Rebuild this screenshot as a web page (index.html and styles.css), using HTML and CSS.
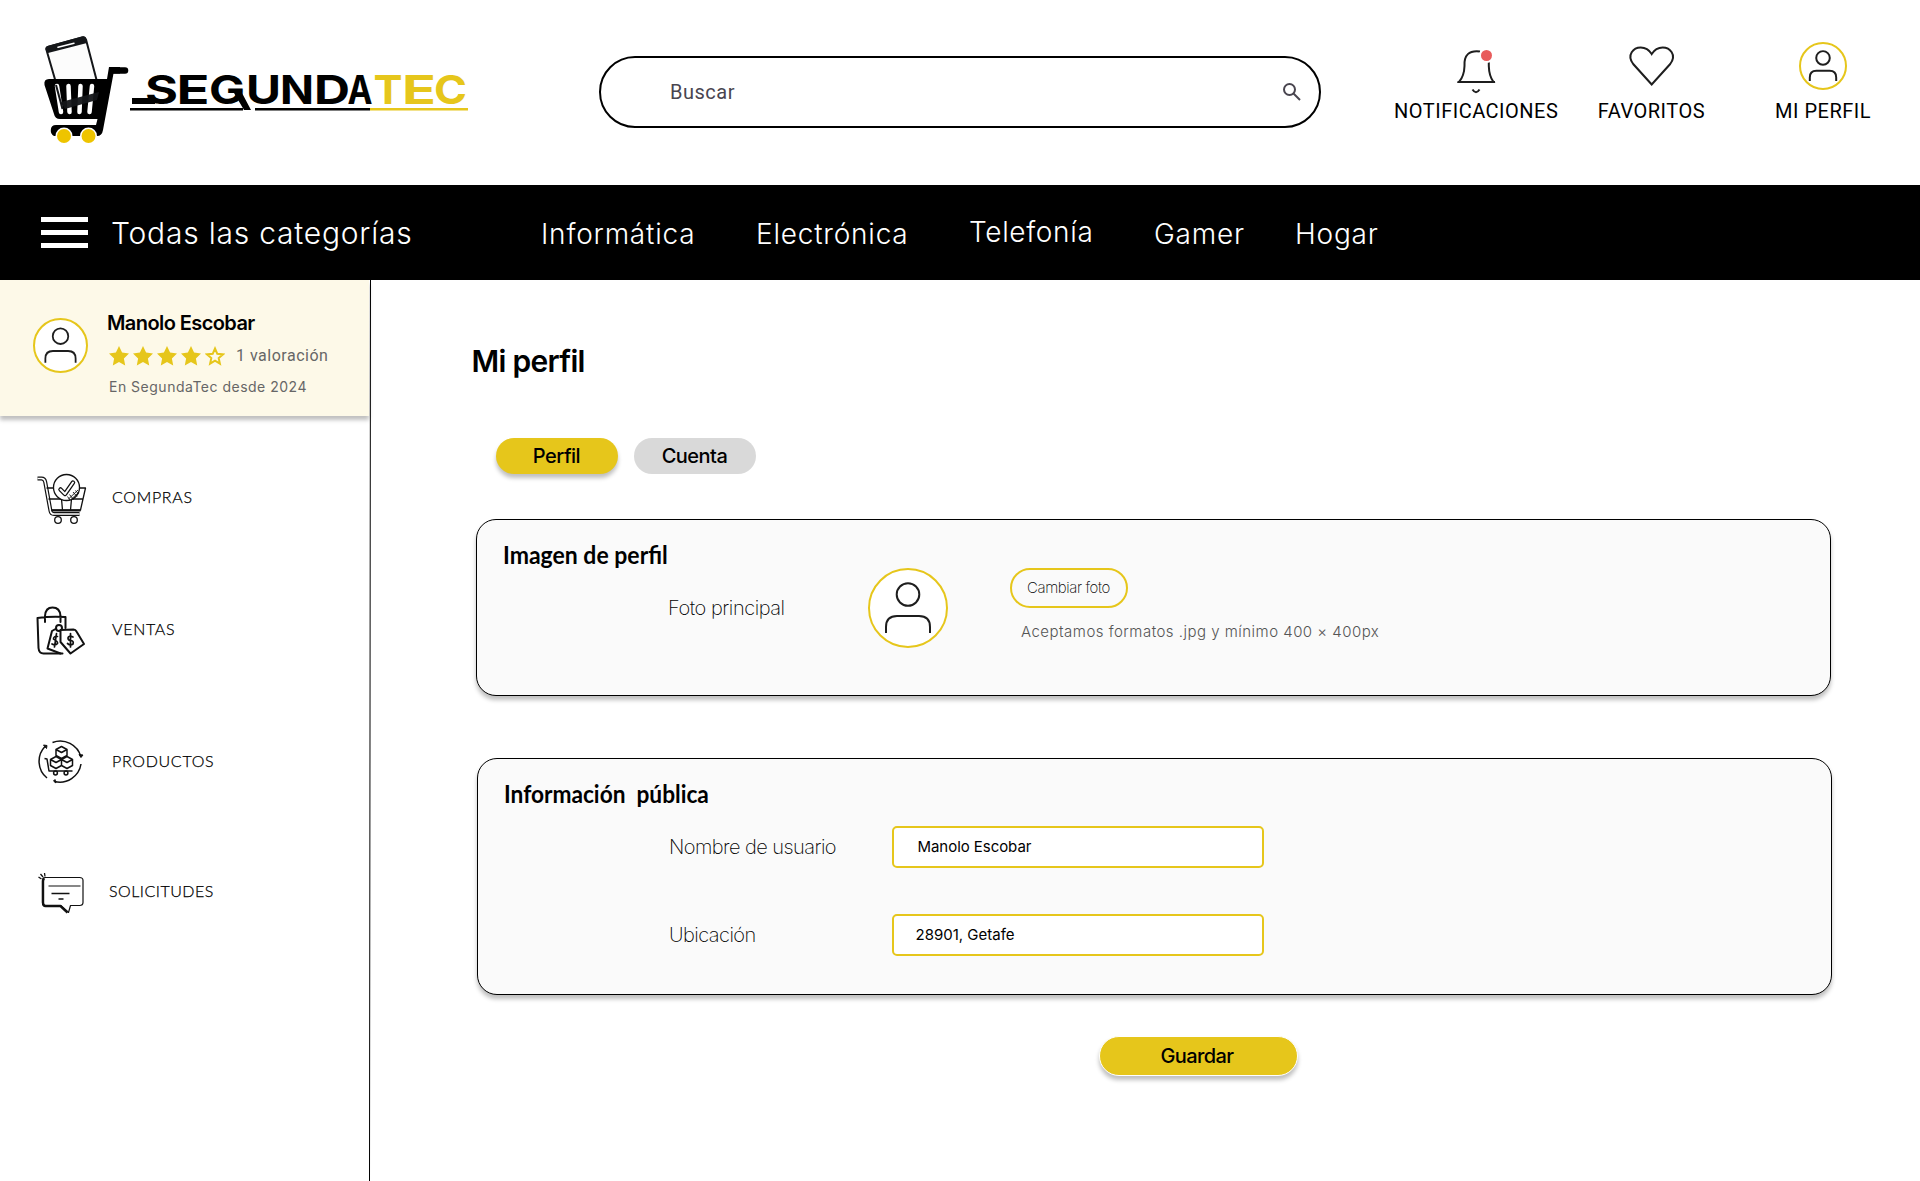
FILE: index.html
```html
<!DOCTYPE html>
<html lang="es">
<head>
<meta charset="utf-8">
<title>SegundaTec - Mi perfil</title>
<link rel="stylesheet" href="styles.css">
</head>
<body>
<svg class="defs" width="0" height="0" aria-hidden="true">
  <symbol id="avatar" viewBox="0 0 80 80">
    <circle cx="40" cy="26.5" r="11.3"/>
    <path d="M18 65V59Q18 48 29 48H51Q62 48 62 59V65"/>
  </symbol>
  <symbol id="star" viewBox="0 0 20 20"><path d="M10 0l3.09 6.6 6.91.9-5.1 4.9 1.3 7.1-6.2-3.5-6.2 3.5 1.3-7.1L0 7.5l6.9-.9z"/></symbol>
</svg>

<header class="top">
  <svg class="logo" viewBox="0 0 450 120" width="450" height="120">
    <g>
      <path fill="#fcfcfc" stroke="#141619" stroke-width="2" stroke-linejoin="round" d="M16.500 10Q16 7.500 18.500 6.800L52 -2.500Q55 -3.300 56 -.5L71 57Q71.500 60 69 61L37 69.500Q34 70 33 67Z"/>
      <path fill="#141619" d="M15.500 9.500Q15 7 17.500 6L52 -3.500Q55 -4.200 56 -1.500L57 3L18 13Z"/>
      <path stroke="#fff" stroke-width="1.500" stroke-linecap="round" d="M28 7.300L44 3.200"/>
      <path fill="#141619" d="M31 61L69 51L71.500 58Q71.500 60.500 69 61L37 70Q34 70 33 67Z"/>
      <path fill="none" stroke="#000" stroke-width="6.500" stroke-linecap="round" d="M95 30.500H83"/>
      <path fill="#000" d="M79 27H90V33.500H83.500L73 90Q72 96 67 96H24Q20.500 94 20.800 90Q21 85 26 85H66L67.500 79H30Q25 79 24 74L14.500 45Q13.500 39 19 39H77Z"/>
      <path stroke="#fff" stroke-width="4.500" stroke-linecap="round" d="M27 46L31 72M38.500 46L39.500 72M50.500 46L49.500 72M62 46L59.500 72"/>
      <path fill="#141619" opacity=".95" d="M31 62L69 52L67 60L35 69Z"/>
      <path stroke="#141619" stroke-width="2" d="M26 45L32.500 69"/>
      <circle cx="34" cy="96" r="8.500" fill="#fff"/><circle cx="58.500" cy="96" r="8.500" fill="#fff"/>
      <circle cx="34" cy="96" r="7" fill="#eec400"/><circle cx="58.500" cy="96" r="7" fill="#eec400"/>
    </g>
    <g class="wordmark">
      <text y="64"><tspan x="115" textLength="33" lengthAdjust="spacingAndGlyphs">S</tspan><tspan x="146.500" textLength="33" lengthAdjust="spacingAndGlyphs">E</tspan><tspan x="179" textLength="36" lengthAdjust="spacingAndGlyphs">G</tspan><tspan x="216" textLength="35" lengthAdjust="spacingAndGlyphs">U</tspan><tspan x="250" textLength="34" lengthAdjust="spacingAndGlyphs">N</tspan><tspan x="284" textLength="36" lengthAdjust="spacingAndGlyphs">D</tspan><tspan x="317.500" textLength="25" lengthAdjust="spacingAndGlyphs">A</tspan></text>
      <text class="gold" y="64"><tspan x="343.500" textLength="29" lengthAdjust="spacingAndGlyphs">T</tspan><tspan x="372" textLength="34" lengthAdjust="spacingAndGlyphs">E</tspan><tspan x="404" textLength="33" lengthAdjust="spacingAndGlyphs">C</tspan></text>
    </g>
    <path fill="#000" d="M102 58H125V64H102ZM100 68H213V70.500H100ZM204 53H212L221 70H214ZM225 68H340V70.500H225Z"/>
    <path fill="#e6c61b" d="M340 68H438V70.500H340Z"/>
  </svg>
  <div class="search">
    <span>Buscar</span>
    <svg width="18" height="18" viewBox="0 0 18 18" fill="none" stroke="#49454f" stroke-width="2"><circle cx="6.500" cy="6.500" r="5.500"/><path d="M10.500 10.500L17 17"/></svg>
  </div>
  <nav class="actions">
    <a class="action">
      <svg width="50" height="50" viewBox="0 0 50 50" fill="none" stroke="#1e1e1e" stroke-width="2">
        <path d="M29 9.500Q12.500 7.500 13.500 24C13.300 31 11.500 36 8 40H42.500C39.500 36 38 31 37.800 24V18M6.500 40H44" /><path d="M21.500 47.500Q25 53 28.500 47.500"/>
        <circle cx="35.500" cy="13.500" r="7.500" fill="#fff" stroke="none"/><circle cx="35.500" cy="13.500" r="5.500" fill="#e85c5c" stroke="none"/>
      </svg>
      <span class="action-name">NOTIFICACIONES</span>
    </a>
    <a class="action fav">
      <svg width="50" height="50" viewBox="-.7 0 50 50" fill="none" stroke="#1e1e1e" stroke-width="2">
        <path d="M25 42.500L6.500 22C-.5 12.500 7 5.500 14 5.500C19 5.500 22.500 8 25 12C27.500 8 31 5.500 36 5.500C43 5.500 50.500 12.500 43.500 22Z"/>
      </svg>
      <span class="action-name">FAVORITOS</span>
    </a>
    <a class="action me">
      <span class="avatar small"><svg viewBox="0 0 80 80"><use href="#avatar"/></svg></span>
      <span class="action-name">MI PERFIL</span>
    </a>
  </nav>
</header>

<nav class="cats">
  <span class="burger"><i></i><i></i><i></i></span>
  <a class="all">Todas las categorías</a>
  <a class="cat c1">Informática</a>
  <a class="cat c2">Electrónica</a>
  <a class="c3">Telefonía</a>
  <a class="cat c4">Gamer</a>
  <a class="cat c5">Hogar</a>
</nav>

<div class="body">
  <aside class="side">
    <section class="user">
      <span class="avatar medium"><svg viewBox="0 0 80 80"><use href="#avatar"/></svg></span>
      <div class="who">
        <strong>Manolo Escobar</strong>
        <div class="rating">
          <svg class="star"><use href="#star"/></svg><svg class="star"><use href="#star"/></svg><svg class="star"><use href="#star"/></svg><svg class="star"><use href="#star"/></svg>
          <svg class="star open" viewBox="0 0 20 20"><path d="M10 2.500l2.300 5.300 5.600.6-4.200 3.700 1.200 5.500-4.900-2.900-4.900 2.900 1.200-5.500-4.200-3.700 5.600-.6z"/></svg>
          <span class="votes">1 valoración</span>
        </div>
        <small>En SegundaTec desde 2024</small>
      </div>
    </section>
    <ul class="menu">
      <li>
        <svg viewBox="0 -2 50 50" fill="none" stroke="#111" stroke-width="1.300" stroke-linejoin="round">
          <path d="M2 4.500H6Q9 4.500 9.700 8L15 37Q15.500 40 18.500 40H44" stroke-width="4"/><path d="M2 4.500H6Q9 4.500 9.700 8L15 37Q15.500 40 18.500 40H44" stroke="#fff" stroke-width="1.600"/>
          <path d="M11 14H50L45 36H16M13 25H47M26 25L27 36M36 25L35 36"/><path d="M16 36.500H45" stroke-width="2"/>
          <circle cx="31" cy="13.500" r="13" fill="#fff"/>
          <path d="M25 15.500L29.500 20L37.500 8.500" stroke-width="4.500" stroke-linecap="round"/><path d="M25 15.500L29.500 20L37.500 8.500" stroke="#fff" stroke-width="2" stroke-linecap="round"/>
          <path d="M33 25L42.500 16M35.500 25.500L43 18.500M34 20.500L38 25.500M37.500 18L41.500 22.500M32 22.500L34.500 26M40 16.500L43 20" stroke-width=".9"/>
          <circle cx="22.500" cy="46" r="3.300"/><circle cx="38.500" cy="46" r="3.300"/>
        </svg>
        <span>COMPRAS</span>
      </li>
      <li>
        <svg viewBox="0 -2 50 50" fill="none" stroke="#111" stroke-width="2" stroke-linejoin="round" stroke-linecap="round">
          <path d="M2 12Q15 10 30 11V22M2 12L3 42Q3.500 47.500 8 47.500H27M9.500 16V10Q10 1.500 17 1.500Q24.500 1.500 25 10V16"/>
          <path d="M20 23L16.500 25L12 42.500L25 47.500" /><circle cx="23.500" cy="22" r="3"/>
          <path fill="#fff" d="M25 24L38 23.500Q40 23.500 41 25.500L48.500 38L35 47.500L25 36Z"/>
          <path stroke-width="1.700" d="M37.500 31Q33 29 32.500 32Q32.500 34.500 35.500 34.500Q38.500 35 37.500 38Q35 40 32 37.500M35 27.500V41M22 30.500Q18 30 18 33Q22.500 35.500 22 37.500Q20 40 16.500 38M21 27.500L19 41"/>
        </svg>
        <span>VENTAS</span>
      </li>
      <li>
        <svg viewBox="0 -1 50 50" fill="none" stroke="#111" stroke-width="1.500" stroke-linejoin="round">
          <path d="M17 5.500A21.500 21.500 0 0 1 45.500 20M45.500 27A21.500 21.500 0 0 1 19 44.500M11.500 41A21.500 21.500 0 0 1 9.500 9.500"/>
          <path fill="#111" stroke-width="1" d="M43.500 17.500L47.500 18L45.500 20.500ZM19.500 42.500L20.500 46L18 44ZM8 8L11.500 8.500L11 11.500Z"/>
          <path d="M26 9.500L31.500 12.500V18.500L26 21.500L20.500 18.500V12.500ZM20.500 12.500L26 15.500L31.500 12.500M20.500 19.500L26 22.500V28.500L20.500 31.500L15 28.500V22.500ZM15 22.500L20.500 25.500L26 22.500M31.500 19.500L37 22.500V28.500L31.500 31.500L26 28.500V22.500ZM26 22.500L31.500 25.500L37 22.500"/>
          <path d="M9 21.500L11.500 22L13.500 34H37"/><circle cx="20" cy="36" r="1.900"/><circle cx="30.500" cy="36" r="1.900"/>
        </svg>
        <span>PRODUCTOS</span>
      </li>
      <li class="req">
        <svg viewBox="0 -3.500 50 50" fill="none" stroke="#111" stroke-width="1.200" stroke-linejoin="round">
          <path d="M10 8H44Q47.500 8 47.500 11V33Q47.500 36 44 36H35L33 43L25 36H10Q7 36 7 33V11Q7 8 10 8"/>
          <path stroke-width="2.400" d="M9 9Q7.500 9.500 7.500 12V33Q7.500 36.500 10 36.500H25L32 43"/>
          <path d="M13 16.500H45"/><path stroke-width="1.400" d="M16 24H34M23 29.500H28"/>
          <path stroke-width="1.300" d="M3 7.500L6 9.500M5 4.500L7.500 7.500M9 3.500L9.500 7"/>
        </svg>
        <span>SOLICITUDES</span>
      </li>
    </ul>
  </aside>
  <svg class="divider" width="3" height="901" viewBox="0 0 3 901"><path stroke="#000" d="M1.500 0L.5 901"/></svg>

  <main class="main">
    <h1>Mi perfil</h1>
    <div class="tabs"><button class="tab on">Perfil</button><button class="tab">Cuenta</button></div>

    <section class="card photo">
      <h2><span class="title">Imagen de perfil</span></h2>
      <div class="photo-row">
        <span class="label">Foto principal</span>
        <span class="avatar large"><svg viewBox="0 0 80 80"><use href="#avatar"/></svg></span>
        <div class="change">
          <button class="outline">Cambiar foto</button>
          <p>Aceptamos formatos .jpg y mínimo 400 × 400px</p>
        </div>
      </div>
    </section>

    <section class="card info">
      <h2><span class="title public">Información&nbsp; pública</span></h2>
      <div class="field"><span class="label">Nombre de usuario</span><div class="input">Manolo Escobar</div></div>
      <div class="field loc"><span class="label">Ubicación</span><div class="input">28901, Getafe</div></div>
    </section>

    <button class="save">Guardar</button>
  </main>
</div>
</body>
</html>
```
FILE: styles.css
```css
* { box-sizing: border-box; }
body { margin: 0; background: #fff; color: #000; font-family: Inter, "Open Sans", sans-serif; width: 1920px; height: 1181px; overflow: hidden; }
.defs { display: block; }
button { border: 0; padding: 0; font: inherit; color: inherit; }
ul, h1, h2, p { margin: 0; padding: 0; }

/* Header */
.top { height: 185px; display: flex; align-items: flex-start; }
.logo { margin: 40px 0 0 30px; overflow: visible; flex: none; }
.wordmark { font: 700 40px Inter, sans-serif; }
.gold { fill: #e6c61b; }
.search { width: 722px; height: 72px; margin: 56px 0 0 119px; border: 2px solid #000; border-radius: 36px; display: flex; align-items: center; justify-content: space-between; padding: 0 18px 0 69px; font: 20px Roboto, sans-serif; letter-spacing: .5px; color: #49454f; flex: none; }
.actions { display: flex; margin: 42px 0 0 73px; font: 20px/24px Roboto, sans-serif; letter-spacing: .5px; }
.action { display: flex; flex-direction: column; align-items: center; white-space: nowrap; }
.action-name { margin-top: 7px; }
.action > svg { overflow: visible; }
.fav { margin-left: 39.500px; }
.me { margin-left: 70px; }

/* Round user picture */
.avatar { flex: none; display: block; border: 2px solid #e6c61b; border-radius: 50%; background: #fff; }
.avatar svg { display: block; fill: none; stroke: #1e1e1e; stroke-width: 2; width: calc(100% + 4px); height: calc(100% + 4px); margin: -2px; }
.small { width: 48px; height: 48px; margin-bottom: 2px; }
.small svg { stroke-width: 3.300; }
.medium { width: 55px; height: 55px; }
.medium svg { stroke-width: 2.600; }
.large { width: 80px; height: 80px; }

/* Category bar */
.cats { height: 95px; background: #000; color: #fff; display: flex; align-items: center; font-size: 28px; font-weight: 350; letter-spacing: .78px; padding-left: 41px; white-space: nowrap; }
.burger { width: 47px; display: grid; gap: 8px; }
.burger i { height: 5px; background: #fff; }
.all { font-size: 30px; margin-left: 23px; width: 302px; }
.cat { padding-top: 2px; }
.c1 { margin-left: 128px; width: 154px; }
.c2 { margin-left: 61px; width: 152px; }
.c3 { margin-left: 61px; width: 125px; padding-bottom: 1px; letter-spacing: .65px; }
.c4 { margin-left: 60px; width: 90px; }
.c5 { margin-left: 51px; }

.body { display: flex; height: 901px; }
.side { width: 369px; flex: none; }
.divider { flex: none; display: block; }

.user { height: 136px; background: #fdf9e8; box-shadow: 0 4px 4px rgba(0, 0, 0, .25); display: flex; padding: 38px 0 0 33px; }
.who { margin: -8px 0 0 19px; }
.who strong { display: block; font-size: 20px; font-weight: 600; line-height: 26px; letter-spacing: -.58px; }
.rating { display: flex; align-items: center; gap: 4px; height: 20px; margin-top: 10px; padding-left: 2px; font: 16px Roboto, sans-serif; letter-spacing: .5px; color: #666; }
.star { width: 20px; height: 20px; fill: #e6c61b; }
.open { fill: none; stroke: #e6c61b; stroke-width: 2; }
.votes { margin: -1px 0 0 7px; }
.who small { display: block; font-size: 14px; line-height: 20px; letter-spacing: .5px; color: #666; margin: 11px 0 0 2px; }

.menu { list-style: none; padding: 56px 0 0 35px; display: grid; gap: 82px; }
.menu li { display: flex; align-items: center; gap: 26px; height: 50px; font: 300 16px Lato, sans-serif; letter-spacing: .7px; -webkit-text-stroke: .25px #000; }
.menu span { margin-top: -1px; }
.menu svg { width: 51px; height: 50px; flex: none; overflow: visible; }
.menu .req { margin-top: -2px; gap: 23px; letter-spacing: .5px; }

/* Profile forms */
.main { padding: 66px 0 0 104px; }
h1 { font-size: 30px; font-weight: 600; line-height: 30px; letter-spacing: -.7px; margin-left: -4.500px; }
.tabs { display: flex; gap: 16px; margin: 62px 0 0 20px; }
.tab { width: 122px; height: 36px; padding-right: 1px; border-radius: 18px; background: #d9d9d9; font-size: 20px; font-weight: 500; letter-spacing: -.5px; }
.on { background: #e6c61b; box-shadow: 0 4px 4px rgba(0, 0, 0, .25); }
.card { width: 1355px; border: 1px solid #000; border-radius: 20px; background: #fafafa; box-shadow: 0 4px 4px rgba(0, 0, 0, .25); padding: 19px 0 0 26px; }
.photo { height: 177px; margin-top: 45px; }
.info { height: 237px; margin: 62px 0 0 1px; }
h2 { font: 700 25px/30px Lato, sans-serif; }
.title { display: inline-block; transform: scaleX(.92); transform-origin: left; }
.public { transform: scaleX(.907); }
.label { width: 200px; font-size: 20px; font-weight: 200; letter-spacing: -.45px; flex: none; }
.photo-row { display: flex; align-items: center; margin: -1px 0 0 165px; height: 80px; }
.change { align-self: flex-start; margin-left: 62px; }
.outline { width: 118px; height: 40px; border: 2px solid #e6c61b; border-radius: 20px; background: none; font-size: 15px; font-weight: 250; letter-spacing: -.4px; padding: 0 1px 1px 0; }
.change p { margin: 14px 0 0 11px; font-size: 15px; line-height: 20px; font-weight: 300; letter-spacing: .48px; color: #555; }
.field { display: flex; align-items: center; margin: 18px 0 0 165px; }
.loc { margin-top: 46px; }
.field .label { letter-spacing: -.55px; }
.input { width: 372px; height: 42px; border: 2px solid #e6c61b; border-radius: 5px; background: #fff; display: flex; align-items: center; padding: 0 0 2px 23.500px; font-size: 15px; letter-spacing: -.05px; margin-left: 23px; }
.loc .input { padding-left: 21.500px; letter-spacing: 0; }
.save { display: block; width: 199px; height: 40px; margin: 41px 0 0 623px; padding-right: 3px; border: 1px solid #fff; border-radius: 20px; background: #e6c61b; box-shadow: 0 4px 4px rgba(0, 0, 0, .25); font-size: 20px; font-weight: 500; letter-spacing: -.6px; }
```
